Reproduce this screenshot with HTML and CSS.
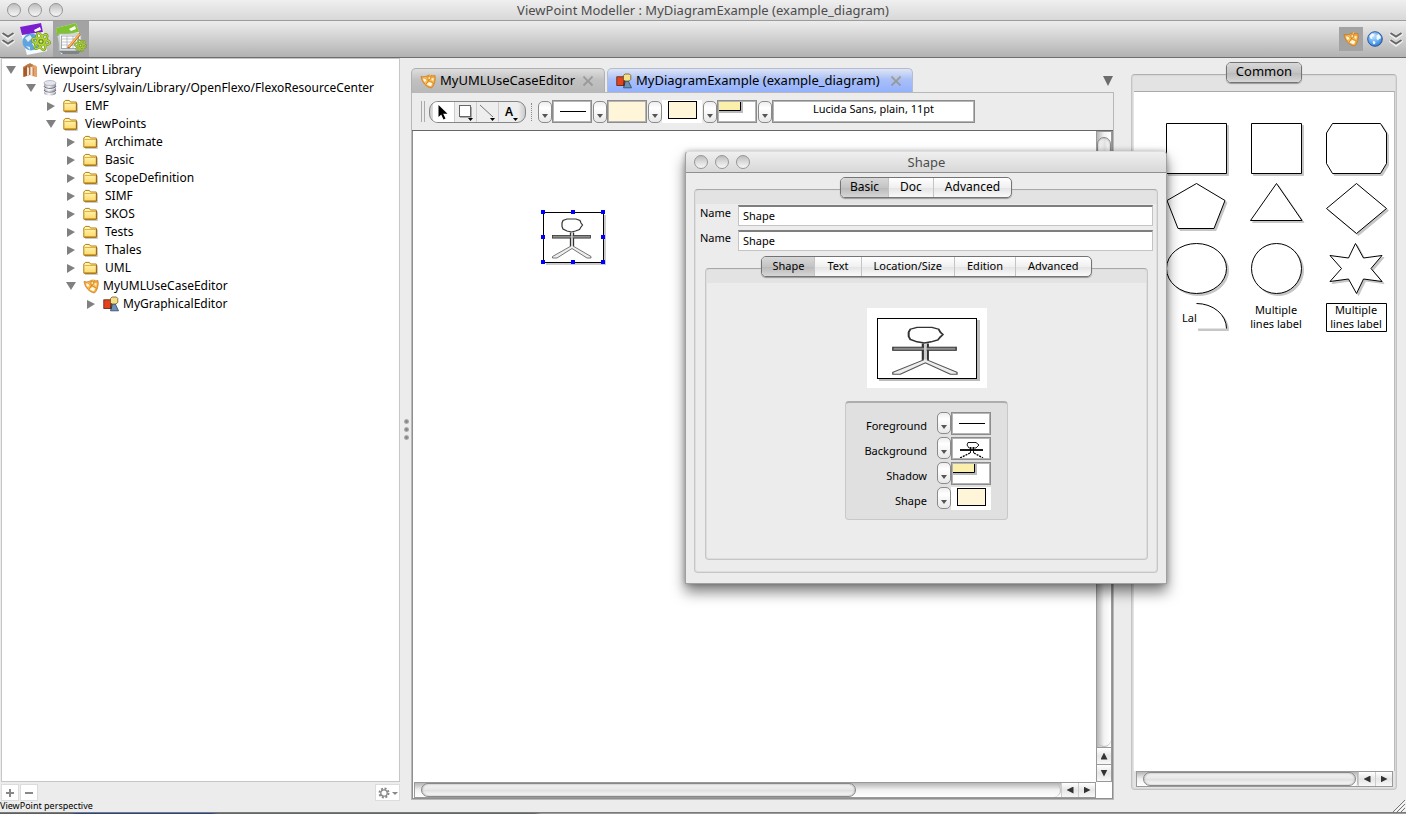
FILE: index.html
```html
<!DOCTYPE html>
<html lang="en">
<head>
<meta charset="utf-8">
<title>ViewPoint Modeller : MyDiagramExample (example_diagram)</title>
<link rel="stylesheet" href="styles.css">
</head>
<body>
<svg class="defs" aria-hidden="true">
  <defs>
    <linearGradient id="gFolder" x1="0" y1="0" x2="0" y2="1"><stop offset="0" stop-color="#fffbc0"/><stop offset="1" stop-color="#ffd868"/></linearGradient>
    <linearGradient id="gPaper" x1="0" y1="0" x2="0" y2="1"><stop offset="0" stop-color="#ffffff"/><stop offset="1" stop-color="#d4d8da"/></linearGradient>
    <radialGradient id="gGlobe" cx=".4" cy=".3" r=".8"><stop offset="0" stop-color="#c5e4ff"/><stop offset=".6" stop-color="#5aa5f0"/><stop offset="1" stop-color="#2a68c0"/></radialGradient>
    <linearGradient id="gDb" x1="0" y1="0" x2="1" y2="0"><stop offset="0" stop-color="#a5a5b0"/><stop offset=".4" stop-color="#f8f8fc"/><stop offset="1" stop-color="#8b8b9a"/></linearGradient>
    <symbol id="i-folder" viewBox="0 0 16 16">
      <path d="M2 14.500h12.500v-9" fill="none" stroke="#c9c9c9"/>
      <path d="M.8 13.200V4l1.500-1.600h4L7.500 4h5.800v9.200z" fill="url(#gFolder)" stroke="#b07e14" stroke-linejoin="round"/>
      <path d="M1.500 5.500h11.500" stroke="#e6b040"/><path d="M1.500 13.200h12V5" stroke="#a06c0c" fill="none"/>
    </symbol>
    <symbol id="i-lib" viewBox="0 0 16 16">
      <path d="M1 5l5-3 2 1v10l-3 1-4 1z" fill="#c67c48"/><path d="M8 3l2-1 5 3v10l-4-1-3-1z" fill="#dd9a66"/>
      <path d="M2 6l2-1v9l-2 .7z" fill="#a8582a"/><path d="M5 5l2 1v7l-2 1z" fill="#efe4da"/><path d="M8 4l3 2v9l-3-2z" fill="#f9ead8"/><path d="M11 6l2-3 2 2v10l-4-1z" fill="#e8a266"/><path d="M8 3v10M11 6v8M4.500 4v10" stroke="#8a4a22" stroke-width=".6"/>
      <path d="M5 3l3-2 3 2-2 2z" fill="#b8794b"/>
    </symbol>
    <symbol id="i-db" viewBox="0 0 16 16">
      <path d="M2 3v10c0 1.400 2.500 2.500 6 2.500s6-1.100 6-2.500V3z" fill="url(#gDb)"/>
      <ellipse cx="8" cy="3" rx="6" ry="2.500" fill="#e4e4ee" stroke="#a6a6b2" stroke-width=".7"/>
      <path d="M2 6.200c1 3 11 3 12 0M2 10c1 3 11 3 12 0" fill="none" stroke="#6f6f7c" stroke-width="1"/><path d="M2 7.200c1 3 11 3 12 0M2 11c1 3 11 3 12 0" fill="none" stroke="#fff" stroke-width=".7"/>
    </symbol>
    <symbol id="i-vp" viewBox="0 0 16 16">
      <path d="M1 3.500C4 4.500 6.500 3.500 9 2c2.500 1 4.500 1 6 .5 0 2 .5 3 0 5-.3 3-1.500 5.500-3.500 7.500C6 14 2 9.500 1 3.500z" fill="#f9a938" stroke="#c0741a" stroke-width=".7"/>
      <path d="M3 5.500c1.800.3 3-.1 4.200-.8L6 8.300 4.600 9C3.700 7.900 3.200 7 3 5.500zM6.500 11l2.800-2 3 1.200-1.200 3.100c-1.800-.3-3.200-.9-4.600-2.300zM11.200 5.500l2.300-.6v2.900l-1.800-.6z" fill="#fff8e4"/>
      <path d="M11 1.500L5.500 10.500M4.500 4.500l9.500 5" stroke="#ffc95c" stroke-width="1.400"/><path d="M11.700 1.800L6.200 11M4.700 5.300l9.300 4.900" stroke="#b36c1a" stroke-width=".5"/><circle cx="9.300" cy="5" r="1.500" fill="#ffe7a8" stroke="#c0741a" stroke-width=".6"/>
    </symbol>
    <symbol id="i-diag" viewBox="0 0 16 16">
      <path d="M9.500 8h2.800l3.200 6.800H7.500z" fill="#6d90b6" stroke="#2c4663" stroke-width=".8"/>
      <rect x=".8" y="3.800" width="7.200" height="8.700" fill="#e2431c" stroke="#5b2010" stroke-width=".8"/>
      <path d="M8.500 7L7.800 13" stroke="#222" stroke-width=".8"/>
      <path d="M9 1h4.500l1.300 1.500v4L13 8H9L7.500 6.500v-4z" fill="#f5e08a" stroke="#6b5a23" stroke-width=".8"/>
    </symbol>
    <symbol id="i-globe" viewBox="0 0 16 16">
      <circle cx="8" cy="8" r="7.300" fill="url(#gGlobe)" stroke="#244f92" stroke-width=".9"/>
      <path d="M2.500 5l2.500-2.500 2.500.8-.5 1.700-2 1.200.5 1.500-1.500.3-1-1.500zM9.500 4.500l2-1.500 2.300 2.500v2l-1.800.5-1 1.500-1.500-1.500zM6 10l2 .5.5 1.500-1.500 1.500-1.200-1.500z" fill="#f2f9ff"/>
    </symbol>
    <symbol id="i-close" viewBox="0 0 12 12"><path d="M1.500 1.500l9 9M10.500 1.500l-9 9" stroke="#999" stroke-width="1.800"/><path d="M3 1.500l3 3 3-3" stroke="#c4c4c4" stroke-width=".8" fill="none"/></symbol>
    <symbol id="i-chev" viewBox="0 0 14 16"><path d="M1 2l6 4.500L13 2M1 9l6 4.500L13 9" fill="none" stroke="#eee" stroke-width="3.800"/><path d="M1.500 2L7 5.500l5.500-3.500M1.500 9L7 12.500l5.500-3.500" fill="none" stroke="#666" stroke-width="1.900"/></symbol>
    <symbol id="i-atom" viewBox="0 0 20 20"><g fill="none" stroke="#6c9415" stroke-width="2.400"><ellipse cx="10" cy="10" rx="9" ry="3.200" transform="rotate(10 10 10)"/><ellipse cx="10" cy="10" rx="9" ry="3.200" transform="rotate(70 10 10)"/><ellipse cx="10" cy="10" rx="9" ry="3.200" transform="rotate(130 10 10)"/></g><g fill="none" stroke="#b7d740" stroke-width="1.200"><ellipse cx="10" cy="10" rx="9" ry="3.200" transform="rotate(10 10 10)"/><ellipse cx="10" cy="10" rx="9" ry="3.200" transform="rotate(70 10 10)"/><ellipse cx="10" cy="10" rx="9" ry="3.200" transform="rotate(130 10 10)"/></g><circle cx="10" cy="10" r="1.800" fill="#d8ef70" stroke="#5e8310"/></symbol>
    <symbol id="i-man" viewBox="0 0 60 50" preserveAspectRatio="none">
      <path d="M19 11l1-2.500 4-1.500h9l4 1.500 1 2.500 1.500 2-1.500 2-1.500 2.500-4 1.500-4 1-4.500-1-4-2-1-2.500z" fill="#fff" stroke="#333" stroke-width="1.200"/>
      <path d="M27.500 20.500v14M30.500 20.500v14" stroke="#333" stroke-width="1.300"/>
      <rect x="9.500" y="23.500" width="38" height="2.600" fill="#8c8c8c" stroke="#333" stroke-width=".8"/>
      <path d="M29 21v13" stroke="#ccc" stroke-width="1.600"/>
      <path d="M28 34L9.500 44.500V46H14l15-9.500L44 46h4v-1.500L30 34" fill="#eee" stroke="#555" stroke-width=".8"/>
    </symbol>
  </defs>
</svg>

<header class="titlebar">
  <div class="lights"><button class="light" aria-label="Close"></button><button class="light" aria-label="Minimise"></button><button class="light" aria-label="Zoom"></button></div>
  <h1 class="window-title">ViewPoint Modeller : MyDiagramExample (example_diagram)</h1>
</header>

<div class="toolbar">
  <button class="chev" aria-label="More"><svg width="14" height="16"><use href="#i-chev"/></svg></button>
  <button class="big-tool" aria-label="Viewpoint perspective">
    <svg width="34" height="34" viewBox="0 0 34 34"><path d="M3 11l22-4 4 22-20 4z" fill="#f8fbfd"/><path d="M2 5l21-4 2 9-21 3z" fill="#7a1fd0"/><path d="M16 8l6-3 1 3-6 2z" fill="#fff"/><circle cx="13" cy="20" r="8.500" fill="#5fa4de"/><path d="M7 16l5-3 2 3-4 4zM14 21l5-4v6l-3 3zM8 24l4 1v3z" fill="#d9edfb"/><use href="#i-atom" x="13" y="9" width="20" height="21"/></svg>
  </button>
  <button class="big-tool is-on" aria-label="Diagram perspective">
    <svg width="34" height="34" viewBox="0 0 34 34"><path d="M2 6l20-5 3 9-2 20-16 2z" fill="#f3f8ea"/><path d="M2 6l20-5 3 9-22 4z" fill="#7fc331"/><path d="M15 7l6-3 1 3-5 2z" fill="#fff"/><rect x="5" y="12" width="22" height="17" fill="url(#gPaper)" stroke="#aab2b6"/><rect x="7.500" y="14" width="17" height="12.500" fill="#fff" stroke="#70787c" stroke-width=".6"/><path d="M7.500 17h17M7.500 20h17M7.500 23h17M13 14v12.500M19 14v12.500" stroke="#9aa2a6" stroke-width=".6"/><path d="M5 29h22l-3 3H9z" fill="#7d8488"/><path d="M14 26l12-14" stroke="#a8601c" stroke-width="2.600"/><path d="M14.500 25l11-13" stroke="#ffb558" stroke-width="1.800"/><use href="#i-atom" x="20" y="17" width="13" height="13"/></svg>
  </button>
  <div class="toolbar-right">
    <button class="small-tool is-on" aria-label="Viewpoint"><svg width="16" height="16"><use href="#i-vp"/></svg></button>
    <button class="small-tool" aria-label="Web"><svg width="16" height="16"><use href="#i-globe"/></svg></button>
    <button class="chev" aria-label="More"><svg width="14" height="16"><use href="#i-chev"/></svg></button>
  </div>
</div>

<main class="work">
  <aside class="browser">
    <ul class="tree">
      <li><div class="row"><button class="tri open" aria-label="Collapse"></button><svg class="ic"><use href="#i-lib"/></svg><span class="lbl">Viewpoint Library</span></div>
        <ul>
          <li><div class="row"><button class="tri open" aria-label="Collapse"></button><svg class="ic"><use href="#i-db"/></svg><span class="lbl">/Users/sylvain/Library/OpenFlexo/FlexoResourceCenter</span></div>
            <ul>
              <li><div class="row"><button class="tri" aria-label="Expand"></button><svg class="ic folder"><use href="#i-folder"/></svg><span class="lbl wide">EMF</span></div></li>
              <li><div class="row"><button class="tri open" aria-label="Collapse"></button><svg class="ic folder"><use href="#i-folder"/></svg><span class="lbl wide">ViewPoints</span></div>
                <ul>
                  <li><div class="row"><button class="tri" aria-label="Expand"></button><svg class="ic folder"><use href="#i-folder"/></svg><span class="lbl wide">Archimate</span></div></li>
                  <li><div class="row"><button class="tri" aria-label="Expand"></button><svg class="ic folder"><use href="#i-folder"/></svg><span class="lbl wide">Basic</span></div></li>
                  <li><div class="row"><button class="tri" aria-label="Expand"></button><svg class="ic folder"><use href="#i-folder"/></svg><span class="lbl wide">ScopeDefinition</span></div></li>
                  <li><div class="row"><button class="tri" aria-label="Expand"></button><svg class="ic folder"><use href="#i-folder"/></svg><span class="lbl wide">SIMF</span></div></li>
                  <li><div class="row"><button class="tri" aria-label="Expand"></button><svg class="ic folder"><use href="#i-folder"/></svg><span class="lbl wide">SKOS</span></div></li>
                  <li><div class="row"><button class="tri" aria-label="Expand"></button><svg class="ic folder"><use href="#i-folder"/></svg><span class="lbl wide">Tests</span></div></li>
                  <li><div class="row"><button class="tri" aria-label="Expand"></button><svg class="ic folder"><use href="#i-folder"/></svg><span class="lbl wide">Thales</span></div></li>
                  <li><div class="row"><button class="tri" aria-label="Expand"></button><svg class="ic folder"><use href="#i-folder"/></svg><span class="lbl wide">UML</span></div></li>
                  <li><div class="row"><button class="tri open" aria-label="Collapse"></button><svg class="ic folder"><use href="#i-vp"/></svg><span class="lbl tight">MyUMLUseCaseEditor</span></div>
                    <ul><li><div class="row"><button class="tri" aria-label="Expand"></button><svg class="ic folder"><use href="#i-diag"/></svg><span class="lbl tight">MyGraphicalEditor</span></div></li></ul>
                  </li>
                </ul>
              </li>
            </ul>
          </li>
        </ul>
      </li>
    </ul>
    <div class="tree-actions">
      <button aria-label="Add"><svg width="8" height="8"><path d="M4 0v8M0 4h8" stroke="#888" stroke-width="2"/></svg></button>
      <button aria-label="Remove"><svg width="8" height="8"><path d="M0 4h8" stroke="#888" stroke-width="2"/></svg></button>
      <button class="gear" aria-label="Options"><svg width="20" height="12" viewBox="0 0 20 12"><circle cx="6" cy="6" r="4.500" fill="none" stroke="#888" stroke-width="2" stroke-dasharray="2 1.530"/><circle cx="6" cy="6" r="3.200" fill="#fff" stroke="#888" stroke-width="1.300"/><path d="M14 5h6l-3 3z" fill="#888"/></svg></button>
    </div>
  </aside>

  <div class="splitter"><i></i><i></i><i></i></div>

  <section class="editor">
    <nav class="tabs">
      <div class="tab"><svg class="ic"><use href="#i-vp"/></svg><button class="tab-name">MyUMLUseCaseEditor</button><button class="tab-x" aria-label="Close tab"><svg width="12" height="12"><use href="#i-close"/></svg></button></div>
      <div class="tab is-active"><svg class="ic"><use href="#i-diag"/></svg><button class="tab-name">MyDiagramExample (example_diagram)</button><button class="tab-x" aria-label="Close tab"><svg width="12" height="12"><use href="#i-close"/></svg></button></div>
      <button class="tab-menu" aria-label="All tabs"></button>
    </nav>
    <div class="editor-frame">
      <div class="tools">
        <span class="grip"></span>
        <div class="tool-group">
          <button class="is-on" aria-label="Select"><svg width="20" height="20"><path d="M5.500 3v12l2.700-2.500 2.300 5 2-1-2.300-4.800h4.300z" fill="#000"/></svg></button>
          <button aria-label="Draw shape"><svg width="20" height="20"><rect x="4.500" y="3.500" width="11" height="11" fill="#fff" stroke="#666"/><path d="M16.500 5v10.500H5" stroke="#aaa" fill="none"/><path d="M13 16h5l-2.500 3z"/></svg></button>
          <button aria-label="Draw connector"><svg width="20" height="20"><path d="M3 3l13 12" stroke="#777"/><path d="M13 16h5l-2.500 3z"/></svg></button>
          <button aria-label="Draw text"><svg width="20" height="20"><text x="6" y="14" class="glyph-a">A</text><path d="M14 16h5l-2.500 3z"/></svg></button>
        </div>
        <span class="dots"></span>
        <button class="drop" aria-label="Foreground"></button><span class="swatch"><svg width="36" height="18"><path d="M5 8.500h26" stroke="#000"/></svg></span>
        <button class="drop" aria-label="Background"></button><span class="swatch cream"></span>
        <button class="drop" aria-label="Shape"></button><span class="swatch plain"><svg width="40" height="23"><rect x="6.500" y="1.500" width="28" height="17" fill="#fff5d9" stroke="#000"/></svg></span>
        <button class="drop" aria-label="Shadow"></button><span class="swatch tucked"><svg width="38" height="20"><path d="M0 0h24v11H0z" fill="#bbb"/><path d="M-1 -1h22.500v9.500H-1z" fill="#faf0ac" stroke="#000"/></svg></span>
        <button class="drop" aria-label="Font"></button><span class="swatch font">Lucida Sans, plain, 11pt</span>
      </div>
      <div class="canvas-grid">
        <div class="canvas">
          <svg class="node" width="66" height="56" viewBox="0 0 66 56">
            <path d="M5 5h60v50H5z" fill="#ccc"/><rect x="2.500" y="2.500" width="60" height="50" fill="#fff" stroke="#000"/>
            <use href="#i-man" x="2" y="2" width="60" height="50"/>
            <g fill="#00f"><path d="M0 0h4v4H0zM30 0h4v4h-4zM60 0h4v4h-4zM0 25h4v4H0zM60 25h4v4h-4zM0 50h4v4H0zM30 50h4v4h-4zM60 50h4v4h-4z"/></g>
          </svg>
        </div>
        <div class="bar vertical"><span class="thumb"></span><span class="trough"></span><button class="arrow up" aria-label="Up"></button><button class="arrow down" aria-label="Down"></button></div>
        <div class="bar horizontal"><span class="thumb"></span><span class="trough"></span><button class="arrow left" aria-label="Left"></button><button class="arrow right" aria-label="Right"></button></div>
      </div>
    </div>
  </section>

  <aside class="palette">
    <div class="seg seg-big"><button class="is-on">Common</button></div>
    <div class="palette-frame">
      <div class="palette-view">
        <svg width="258" height="260" viewBox="0 0 258 260">
          <g transform="translate(-1134 -92)" class="shapes">
            <g class="shade" transform="translate(2 2)"><path d="M1166.500 123.500h60v50h-60zM1251.500 123.500h50v50h-50zM1332.500 123.500h48l6 9.500v30.500l-6 10h-48l-6-10v-30.500zM1196.500 183.500l28.500 17-11 28h-36l-11-28zM1276.500 183.500l25.500 37h-51.500zM1356.500 183.500l30 25-30 25-30-25z"/><ellipse cx="1196.500" cy="268.500" rx="30" ry="25"/><circle cx="1276.500" cy="268.500" r="25"/><path d="M1355.500 243.500l8 14.500 18.500-2.500-11 13 11 13-18.500-2.500-7 14.500-8-14.500-18.500 2.500 11.500-13-11.500-13 18.500 2.500z"/><path d="M1196.500 303.500a30 25 0 0 1 30 25h-30z"/></g>
            <g class="outline"><path d="M1166.500 123.500h60v50h-60zM1251.500 123.500h50v50h-50zM1332.500 123.500h48l6 9.500v30.500l-6 10h-48l-6-10v-30.500zM1196.500 183.500l28.500 17-11 28h-36l-11-28zM1276.500 183.500l25.500 37h-51.500zM1356.500 183.500l30 25-30 25-30-25z"/><ellipse cx="1196.500" cy="268.500" rx="30" ry="25"/><circle cx="1276.500" cy="268.500" r="25"/><path d="M1355.500 243.500l8 14.500 18.500-2.500-11 13 11 13-18.500-2.500-7 14.500-8-14.500-18.500 2.500 11.500-13-11.500-13 18.500 2.500z"/><path d="M1326.500 303.500h60v28h-60z"/></g>
            <path d="M1196.500 303.500a30 25 0 0 1 30 25h-30z" fill="#fff"/><path d="M1196.500 303.500a30 25 0 0 1 30 25" fill="none" stroke="#000"/>
            <text x="1182" y="322">Lal</text>
            <g text-anchor="middle"><text x="1276" y="314">Multiple</text><text x="1276" y="328">lines label</text><text x="1356" y="314">Multiple</text><text x="1356" y="328">lines label</text></g>
          </g>
        </svg>
      </div>
      <div class="bar horizontal"><span class="thumb"></span><span class="trough short"></span><button class="arrow left" aria-label="Left"></button><button class="arrow right" aria-label="Right"></button></div>
    </div>
  </aside>
</main>

<footer class="status"><span>ViewPoint perspective</span><svg width="14" height="13"><path d="M1 13L13 1M5 13l8-8M9 13l4-4" stroke="#777"/><path d="M2 14L14 2M6 14l8-8M10 14l4-4" stroke="#fff" stroke-width=".7"/></svg></footer>
<div class="desktop"></div>

<section class="dialog" role="dialog" aria-label="Shape">
  <header class="dialog-title">
    <div class="lights"><button class="light" aria-label="Close"></button><button class="light" aria-label="Minimise"></button><button class="light" aria-label="Zoom"></button></div>
    <h2 class="window-title">Shape</h2>
  </header>
  <div class="dialog-body">
    <div class="seg seg-mid"><button class="is-on">Basic</button><button>Doc</button><button>Advanced</button></div>
    <div class="panel outer">
      <div class="form-row"><label for="n1">Name</label><input id="n1" type="text" value="Shape"></div>
      <div class="form-row"><label for="n2">Name</label><input id="n2" type="text" value="Shape"></div>
      <div class="seg seg-small"><button class="is-on">Shape</button><button>Text</button><button>Location/Size</button><button>Edition</button><button>Advanced</button></div>
      <div class="panel inner">
        <svg class="preview" width="120" height="80"><path d="M12 12h101v61H12z" fill="#bbb"/><rect x="10.500" y="10.500" width="99" height="60" fill="#fff" stroke="#000"/><use href="#i-man" x="10" y="11" width="100" height="60"/></svg>
        <div class="props">
          <span>Foreground</span><button class="drop" aria-label="Foreground"></button><span class="swatch"><svg width="36" height="18"><path d="M5 8.500h26" stroke="#000"/></svg></span>
          <span>Background</span><button class="drop" aria-label="Background"></button><span class="swatch"><svg width="36" height="18"><path d="M14 2.500h8l3 2.500-3 3h-7l-2-3zM6 9.500h23M6 10.500h23M16.500 7v6M19.500 7v6" fill="none" stroke="#000" stroke-width=".9"/><path d="M16 13L6 18M20 13l9 5" stroke="#000" stroke-width="1.300" stroke-dasharray="2 1"/></svg></span>
          <span>Shadow</span><button class="drop" aria-label="Shadow"></button><span class="swatch tucked"><svg width="38" height="20"><path d="M0 0h24v11H0z" fill="#bbb"/><path d="M-1 -1h22.500v9.500H-1z" fill="#faf0ac" stroke="#000"/></svg></span>
          <span>Shape</span><button class="drop" aria-label="Shape"></button><span class="swatch plain"><svg width="40" height="23"><rect x="6.500" y="1.500" width="28" height="17" fill="#fff5d9" stroke="#000"/></svg></span>
        </div>
      </div>
    </div>
  </div>
</section>
</body>
</html>
```
FILE: styles.css
```css
* { box-sizing: border-box; }
body {
  margin: 0;
  height: 100vh;
  display: flex;
  flex-direction: column;
  overflow: hidden;
  position: relative;
  background: #ececec;
  color: #000;
  font: 12px/18px "Noto Sans", "DejaVu Sans", sans-serif;
}
button { font: inherit; color: inherit; border: 0; padding: 0; margin: 0; background: none; }
svg { display: block; flex: none; }
ul { list-style: none; margin: 0; padding: 0; }
.defs { position: absolute; width: 0; height: 0; }
.ic { width: 16px; height: 16px; }

/* window chrome */
.titlebar, .dialog-title { display: flex; align-items: center; position: relative; flex: none; background: linear-gradient(#efefef, #d8d8d8); }
.titlebar { height: 21px; border-bottom: 1px solid #9c9c9c; padding-left: 7px; }
.lights { display: flex; gap: 7px; }
.light { width: 14px; height: 14px; border-radius: 50%; border: 1px solid #969696; background: linear-gradient(#bdbdbd, #e2e2e2 60%, #f6f6f6); }
.window-title { flex: 1; margin: 0 63px 0 0; text-align: center; font-weight: 400; font-size: 13px; line-height: 20px; color: #4c4c4c; }
.toolbar { height: 37px; flex: none; display: flex; align-items: center; padding-left: 1px; background: linear-gradient(#ededed, #b2b2b2); border-bottom: 1px solid #6e6e6e; }
.chev { width: 16px; height: 16px; }
.big-tool { width: 36px; height: 36px; display: grid; place-items: center; }
.big-tool.is-on, .small-tool.is-on { background: #a3a3a3; }
.toolbar-right { margin-left: auto; display: flex; align-items: center; padding-right: 1px; }
.toolbar-right .chev { margin-left: 2px; }
.small-tool { width: 24px; height: 24px; display: grid; place-items: center; }

.work { flex: 1; display: flex; min-height: 0; }

/* library tree */
.browser { width: 400px; flex: none; display: flex; flex-direction: column; padding-left: 1px; }
.tree { flex: 1; background: #fff; border: 1px solid #c6c6c6; padding: 2px 0 0 4px; overflow: hidden; }
.tree ul { padding-left: 20px; }
.row { display: flex; align-items: center; height: 18px; }
.tri { width: 10px; height: 10px; background: #808080; clip-path: polygon(1px 1px, 9px 5px, 1px 10px); margin-right: 6px; }
.tri.open { clip-path: polygon(0 1px, 10px 1px, 5px 9px); }
.folder { margin-left: 1px; }
.lbl { padding-left: 5px; white-space: nowrap; }
.lbl.wide { padding-left: 6px; }
.lbl.tight { padding-left: 4px; }
.tree-actions { display: flex; height: 17px; margin-top: 2px; gap: 1px; }
.tree-actions button { width: 18px; height: 17px; background: #fff; border: 1px solid #dcdcdc; display: grid; place-items: center; }
.tree-actions .gear { width: 25px; margin-left: auto; }

.splitter { width: 11px; flex: none; display: flex; flex-direction: column; justify-content: center; align-items: center; gap: 3px; padding-left: 2px; }
.splitter i { width: 5px; height: 5px; border-radius: 50%; background: radial-gradient(#777, #d0d0d0); }

/* editor */
.editor { flex: 1; display: flex; flex-direction: column; min-width: 0; padding: 10px 0 1px; }
.tabs { display: flex; align-items: flex-end; gap: 2px; }
.tab { height: 24px; display: flex; align-items: center; padding: 0 10px 0 8px; border: 1px solid #b0b0b0; border-bottom: 0; border-radius: 5px 5px 0 0; background: linear-gradient(#dedede, #c0c0c0 50%, #b9b9b9); }
.tab.is-active { background: linear-gradient(#dfe5f4, #a9bff6 45%, #93b2ff); border-color: #b3bcd0; }
.tab-name { font-size: 13px; margin: 0 7px 0 4px; padding-bottom: 2px; white-space: nowrap; }
.is-active .tab-name { margin-right: 10px; }
.tab-menu { margin: 0 1px 6px auto; width: 10px; height: 10px; background: #6c6c6c; clip-path: polygon(0 0, 100% 0, 50% 100%); }
.editor-frame { flex: 1; display: flex; flex-direction: column; min-height: 0; border: 1px solid #b8b8b8; }
.tools { height: 38px; flex: none; display: flex; align-items: center; padding-left: 9px; border-bottom: 1px solid #666; }
.grip { width: 4px; height: 21px; border: 1px solid #aaa; border-width: 0 1px; margin-right: 4px; }
.tool-group { display: flex; height: 22px; width: 97px; border: 1px solid #858585; border-radius: 9px; background: linear-gradient(90deg, #ccc, #eee 6px, #eee 88px, #ccc); padding: 0 4px 0 3px; overflow: hidden; }
.tool-group button { width: 22px; border-right: 1px solid #ccc; }
.tool-group button:last-child { border: 0; }
.tool-group .is-on { background: #fff; }
.glyph-a { font: 600 12px "Noto Sans", sans-serif; }
.dots { height: 18px; border-left: 1px dotted #888; margin: 0 6px 0 5px; }
.drop { width: 14px; height: 22px; flex: none; border: 1px solid #8a8a8a; border-radius: 5px; background: linear-gradient(#eee, #fff 30%, #e8e8e8); display: grid; place-items: center; padding-top: 8px; }
.drop::before { content: ""; border: 3px solid transparent; border-top: 4px solid #555; border-bottom: 0; }
.swatch { width: 40px; height: 23px; flex: none; border: 1px solid #8c8c8c; box-shadow: inset 0 0 0 1px #b5b5b5; padding: 2px; background: #fff; margin-right: 1px; }
.swatch.cream { background: #fff5d9; }
.swatch.plain { border: 0; padding: 0; box-shadow: none; }
.swatch.tucked { padding: 1px; }
.swatch.font { width: 203px; padding: 0; font-size: 11px; line-height: 16px; text-align: center; }

.canvas-grid { flex: 1; display: grid; grid-template-columns: 1fr 16px; grid-template-rows: 1fr 16px; min-height: 0; background: #fff; border: 1px solid #8f8f8f; border-top: 0; }
.canvas { position: relative; overflow: hidden; }
.node { position: absolute; left: 128px; top: 79px; }

/* scroll bars */
.bar { display: flex; background: linear-gradient(#b5b5b5, #f2f2f2 50%, #fff); border: 1px solid #999; }
.bar.horizontal { height: 16px; padding-left: 6px; margin-left: 1px; }
.bar.vertical { flex-direction: column; padding-top: 5px; width: 16px; background: linear-gradient(90deg, #b5b5b5, #f2f2f2 50%, #fff); }
.thumb { border: 1px solid #888; border-radius: 8px; box-shadow: inset 0 0 2px #999; background: linear-gradient(#f2f2f2, #e8e8e8 45%, #dedede 50%, #fbfbfb); }
.horizontal .thumb { flex: 0 0 64.500%; }
.palette .horizontal .thumb { flex: 1; }
.vertical .thumb { flex: 0 0 60%; background: linear-gradient(90deg, #f2f2f2, #e8e8e8 45%, #dedede 50%, #fbfbfb); }
.trough { flex: 1; border-radius: 0 8px 8px 0; border-right: 1px solid #bbb; }
.vertical .trough { border-radius: 0 0 8px 8px; border-right: 0; border-bottom: 1px solid #bbb; }
.trough.short { flex: 0 0 2px; }
.arrow { flex: 0 0 17px; display: grid; place-items: center; background: linear-gradient(#fff, #e6e6e6 50%, #f8f8f8); border-left: 1px solid #ccc; }
.vertical .arrow { border-left: 0; border-top: 1px solid #999; }
.arrow::before { content: ""; width: 7px; height: 7px; background: #333; }
.up::before { clip-path: polygon(0 100%, 50% 0, 100% 100%); }
.down::before { clip-path: polygon(0 0, 50% 100%, 100% 0); }
.left::before { clip-path: polygon(100% 0, 0 50%, 100% 100%); }
.right::before { clip-path: polygon(0 0, 100% 50%, 0 100%); }

/* palette */
.palette { width: 266px; flex: none; margin: 4px 9px 11px 17px; display: flex; flex-direction: column; }
.palette-frame { flex: 1; display: flex; flex-direction: column; min-height: 0; border: 1px solid #c4c4c4; border-top-color: #b0b0b0; box-shadow: inset 0 0 0 1px #d8d8d8; border-radius: 4px; background: #e3e3e3; padding: 16px 1px 1px 2px; }
.palette-view { flex: 1; overflow: hidden; background: #fff; border-top: 1px solid #aaa; border-right: 1px solid #bbb; }
.palette-frame > .bar { margin: 0 2px 1px 2px; }
.shapes text { font-size: 11px; }
.shade { fill: #c6c6c6; stroke: #c6c6c6; stroke-width: 1; }
.outline { fill: #fff; stroke: #000; }

/* segmented tabs */
.seg { align-self: center; display: flex; position: relative; z-index: 1; height: 21px; border: 1px solid #747474; border-radius: 5px; overflow: hidden; margin-bottom: -9px; background: linear-gradient(#fff, #f0f0f0 50%, #e3e3e3 51%, #fafafa); box-shadow: 0 1px 1px #999; flex: none; }
.seg button { padding: 0 11px 2px; border-left: 1px solid #c4c4c4; line-height: 17px; }
.seg button:first-child { border-left: 0; padding: 0 9px 2px; }
.seg .is-on { background: linear-gradient(#d8d8d8, #c4c4c4 50%, #b9b9b9 51%, #d6d6d6); }
.seg-big { font-size: 13px; }
.seg-small { font-size: 11px; margin-top: 1px; }
.seg-small button { padding: 0 12px 2px; }
.seg-small button:first-child { padding: 0 10px 2px; }

.status { height: 11px; flex: none; display: flex; justify-content: space-between; align-items: flex-end; font-size: 9px; line-height: 12px; }
.desktop { height: 2px; flex: none; border-top: 1px solid #7a7a7a; background: linear-gradient(90deg, #59605f 5%, #28438c 5.500% 15%, #626968 15.500% 38%, #9a9a9a 38.500%); }

/* inspector */
.dialog { position: absolute; left: 685px; top: 151px; width: 482px; background: #ececec; border: 1px solid #a0a0a0; border-top-color: #ddd; border-radius: 4px 4px 0 0; box-shadow: 0 8px 14px rgba(0,0,0,.5), 0 0 5px rgba(0,0,0,.25); }
.dialog-title { height: 21px; border-bottom: 1px solid #8f8f8f; border-radius: 4px 4px 0 0; padding-left: 8px; }
.dialog-body { padding: 4px 8px 10px; display: flex; flex-direction: column; }
.panel { border: 1px solid #c6c6c6; border-top-color: #a8a8a8; box-shadow: inset 0 0 0 1px #dedede; border-radius: 4px; background: linear-gradient(#e3e3e3 14px, #ececec 14px); display: flex; flex-direction: column; }
.outer { padding: 15px 4px 12px 5px; }
.inner { margin: 0 5px; padding: 39px 0 39px; align-items: center; gap: 13px; }
.form-row { display: flex; height: 21px; margin-bottom: 4px; font-size: 11px; line-height: 16px; }
.form-row label { width: 38px; }
.form-row input { flex: 1; min-width: 0; font: inherit; padding: 0 4px 1px; border: 1px solid #c4c4c4; border-top: 2px solid #7e7e7e; background: #fff; }
.preview { background: #fff; }
.props { display: grid; grid-template-columns: auto 14px 40px; grid-auto-rows: 23px; row-gap: 2px; width: 163px; padding: 9px 16px; border: 1px solid #c8c8c8; border-top: 2px solid #adadad; border-radius: 4px; background: #e0e0e0; font-size: 11px; line-height: 28px; text-align: right; }
.props > span:nth-child(3n+1) { padding-right: 10px; }
```
